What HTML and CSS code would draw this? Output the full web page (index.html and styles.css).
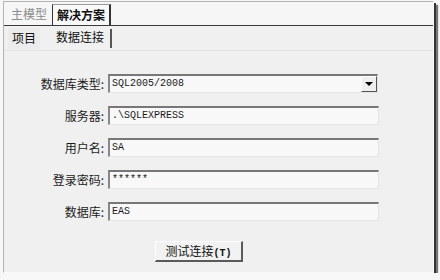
FILE: index.html
```html
<!DOCTYPE html>
<html>
<head lang="zh">
    <meta charset="UTF-8">
    <title>数据连接</title>
    <link rel="stylesheet" href="styles.css">
</head>
<body>
<div class="frame">
    <div class="tabbar">
        <span class="tab">主模型</span>
        <span class="tab active">解决方案</span>
    </div>
    <div class="subbar">
        <span class="subtab">项目</span>
        <span class="subtab current">数据连接</span>
    </div>
    <div class="form">
        <label class="label">数据库类型:</label>
        <div class="combo">
            <span class="value">SQL2005/2008</span>
            <span class="drop"><i></i></span>
        </div>
        <label class="label">服务器:</label>
        <div class="field"><span class="value">.\SQLEXPRESS</span></div>
        <label class="label">用户名:</label>
        <div class="field"><span class="value">SA</span></div>
        <label class="label">登录密码:</label>
        <div class="field"><span class="value pwd">******</span></div>
        <label class="label">数据库:</label>
        <div class="field"><span class="value">EAS</span></div>
        <div class="btnrow">
            <span class="btn">测试连接<em>(T)</em></span>
        </div>
    </div>
</div>
</body>
</html>
```
FILE: styles.css
```css
* {
    margin: 0;
    padding: 0;
    box-sizing: border-box;
}

body {
    background-color: #f7f7f7;
    font-family: "Noto Sans CJK SC", sans-serif;
    font-size: 12px;
    color: #222;
}

.frame {
    width: 431px;
    height: 272px;
    margin: 1px 0 0 3px;
    background-color: #f0f0f0;
    border: 1px solid #b4b4b4;
    border-right-color: #fafafa;
    border-bottom-color: #fafafa;
    box-shadow: 2px 2px 0 #333, 4px 4px 1px #777;
}

.tabbar {
    height: 24px;
    display: flex;
    align-items: flex-end;
    background-color: #f6f6f6;
    border-bottom: 1px solid #3a3a3a;
    padding-left: 5px;
}

.tab {
    height: 21px;
    line-height: 19px;
    padding: 0 4px 0 2px;
    white-space: nowrap;
    color: #8c8c8c;
}

.tab.active {
    margin-left: 1px;
    padding: 0 4px;
    color: #111;
    font-weight: bold;
    background-color: #f9f9f9;
    border: 1px solid #9a9a9a;
    border-left-color: #333;
    border-right: 2px solid #333;
    border-bottom: none;
}

.subbar {
    height: 25px;
    display: flex;
    align-items: center;
    padding-left: 4px;
    border-bottom: 1px solid #e2e2e2;
}

.subtab {
    height: 21px;
    line-height: 20px;
    padding: 0 4px;
    white-space: nowrap;
    color: #111;
    background-color: #ebebeb;
}

.subtab.current {
    margin-left: 12px;
    padding: 0 6px 0 4px;
    background-color: transparent;
    border-right: 2px solid #555;
    height: 19px;
    line-height: 16px;
}

.form {
    display: grid;
    grid-template-columns: 100px 271px;
    grid-auto-rows: 19px;
    column-gap: 4px;
    row-gap: 13px;
    padding-top: 23px;
}

.label {
    text-align: right;
    line-height: 19px;
    white-space: nowrap;
    color: #1c1c1c;
}

.field, .combo {
    position: relative;
    height: 19px;
    background-color: #f8f8f8;
    border: 1px solid #e4e4e4;
    border-top: 2px solid #777;
    border-left: 2px solid #888;
}

.combo {
    width: 270px;
}

.value {
    display: block;
    padding-left: 2px;
    font-family: "Liberation Mono", monospace;
    font-size: 10px;
    line-height: 16px;
    color: #1a1a1a;
}

.pwd {
    line-height: 15px;
}

.drop {
    position: absolute;
    right: 0;
    top: 0;
    width: 16px;
    height: 16px;
    background-color: #efefef;
    border: 1px solid #fff;
    border-right-color: #555;
    border-bottom-color: #555;
    display: flex;
    align-items: center;
    justify-content: center;
}

.drop i {
    width: 0;
    height: 0;
    border-left: 4px solid transparent;
    border-right: 4px solid transparent;
    border-top: 4px solid #000;
}

.btnrow {
    grid-column: 2;
    padding-top: 7px;
}

.btn {
    display: block;
    width: 88px;
    height: 21px;
    margin-left: 47px;
    text-align: center;
    line-height: 18px;
    background-color: #f2f2f2;
    border: 1px solid #fff;
    border-right: 2px solid #5a5a5a;
    border-bottom: 2px solid #5a5a5a;
    color: #111;
}

.btn em {
    font-style: normal;
    font-family: "Liberation Mono", monospace;
    font-size: 10px;
    font-weight: bold;
}
```
